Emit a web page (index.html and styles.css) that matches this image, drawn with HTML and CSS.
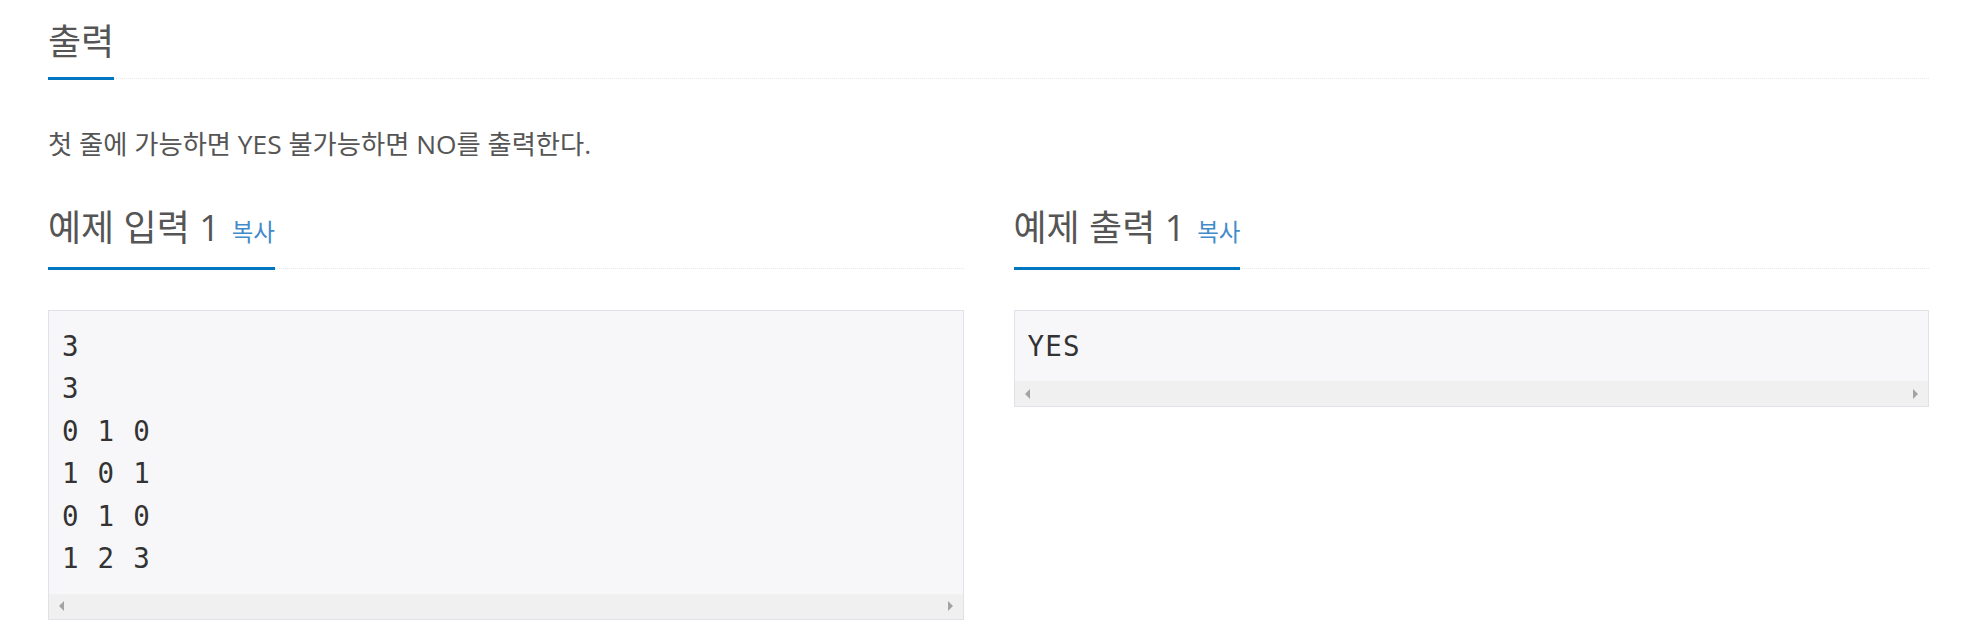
FILE: index.html
```html
<!DOCTYPE html>
<html lang="ko">
<head>
<meta charset="utf-8">
<title>출력</title>
<link rel="stylesheet" href="styles.css">
</head>
<body>
<div class="page">
  <section class="section">
    <div class="headline"><h2>출력</h2></div>
    <p class="desc">첫 줄에 가능하면 YES 불가능하면 NO를 출력한다.</p>
  </section>
  <div class="samples">
    <section class="sample">
      <div class="headline"><h2>예제 입력 1 <span class="copy">복사</span></h2></div>
      <div class="box">
        <pre class="data">3
3
0 1 0
1 0 1
0 1 0
1 2 3</pre>
        <div class="scrollbar"><span class="arrow left"></span><span class="arrow right"></span></div>
      </div>
    </section>
    <section class="sample">
      <div class="headline"><h2>예제 출력 1 <span class="copy">복사</span></h2></div>
      <div class="box">
        <pre class="data">YES</pre>
        <div class="scrollbar"><span class="arrow left"></span><span class="arrow right"></span></div>
      </div>
    </section>
  </div>
</div>
</body>
</html>
```
FILE: styles.css
```css
html, body {
  margin: 0;
  padding: 0;
  background: #fff;
}
body {
  font-family: "Open Sans", "Noto Sans CJK KR", sans-serif;
  color: #555;
}
.page {
  padding: 18px 39px 0 48px;
}
.headline {
  border-bottom: 1px dotted #e4e9f0;
}
.headline h2 {
  display: inline-block;
  margin: 0 0 -2px 0;
  font-size: 36px;
  font-weight: 400;
  line-height: 48px;
  padding-bottom: 11px;
  border-bottom: 3px solid #0076c0;
  color: #555;
}
.desc {
  margin: 47px 0 0 0;
  font-size: 26.3px;
  line-height: 37.5px;
  color: #555;
}
.samples {
  display: grid;
  grid-template-columns: 1fr 1fr;
  column-gap: 50px;
  margin-top: 40px;
}
.copy {
  font-size: 23.5px;
  color: #428bca;
  margin-left: 2.5px;
}
.box {
  margin-top: 41px;
  border: 1px solid #e1e1e8;
  background: #f7f7f9;
}
.data {
  margin: 0;
  padding: 14px 13px;
  font-family: "DejaVu Sans Mono", monospace;
  font-size: 27.5px;
  letter-spacing: 1.25px;
  line-height: 42.5px;
  color: #333;
}
.scrollbar {
  height: 25px;
  background: #f0f0f0;
  display: flex;
  align-items: center;
  justify-content: space-between;
  padding: 0 10px;
}
.arrow {
  width: 0;
  height: 0;
  border-top: 5px solid transparent;
  border-bottom: 5px solid transparent;
}
.arrow.left {
  border-right: 5px solid #a3a3a3;
}
.arrow.right {
  border-left: 5px solid #a3a3a3;
}
```
